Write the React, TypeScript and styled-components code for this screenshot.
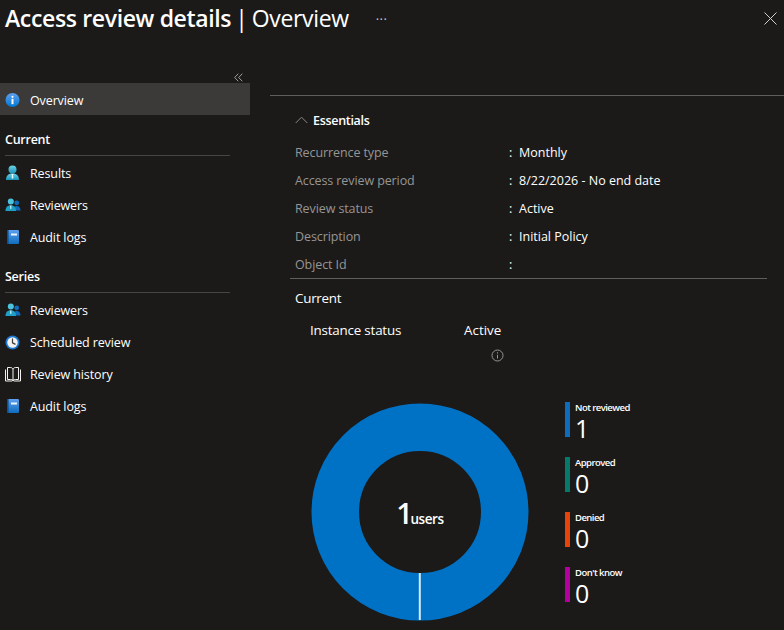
import * as React from "react";
import styled, { createGlobalStyle } from "styled-components";

const FONT = `"Open Sans", "Noto Sans", "Liberation Sans", sans-serif`;

const GlobalStyle = createGlobalStyle`
  html, body {
    margin: 0;
    padding: 0;
    background: #1b1a19;
    overflow: hidden;
  }
  body {
    font-family: ${FONT};
    color: #fff;
  }
`;

const Page = styled.div`
  width: 784px;
  height: 630px;
  overflow: hidden;
  background: #1b1a19;
`;

const Header = styled.header`
  height: 71px;
  display: flex;
  align-items: flex-start;
  padding: 2px 7px 0 5px;
  box-sizing: border-box;
`;

const Title = styled.h1`
  margin: 0;
  font-size: 23px;
  line-height: 32px;
  font-weight: 400;
  letter-spacing: -0.35px;
  word-spacing: -1.5px;
  white-space: nowrap;
  b {
    font-weight: 600;
    word-spacing: 0;
  }
`;

const More = styled.span`
  margin: 5px 0 0 27px;
  font-size: 13px;
  line-height: 24px;
  letter-spacing: 0.5px;
  color: #c8c6c4;
`;

const CloseButton = styled.button`
  margin: 10px 0 0 auto;
  padding: 0;
  width: 13px;
  height: 13px;
  border: 0;
  background: none;
  display: block;
`;

const Columns = styled.div`
  display: grid;
  grid-template-columns: 250px 1fr;
  column-gap: 20px;
`;

const Sidebar = styled.nav`
  display: flex;
  flex-direction: column;
`;

const CollapseRow = styled.div`
  height: 12px;
  display: flex;
  justify-content: flex-end;
  align-items: center;
  padding-right: 7px;
`;

const NavItem = styled.div<{ $active?: boolean }>`
  height: 32px;
  display: flex;
  align-items: center;
  gap: 10px;
  padding-left: 5px;
  padding-top: ${(p) => (p.$active ? "2px" : "0")};
  box-sizing: border-box;
  font-size: 12.5px;
  letter-spacing: -0.12px;
  background: ${(p) => (p.$active ? "#3b3a39" : "transparent")};
`;

const IconSlot = styled.span`
  width: 15px;
  height: 16px;
  display: flex;
  align-items: center;
  justify-content: center;
  flex: none;
  svg {
    flex: none;
  }
`;

const NavGroup = styled.div<{ $first?: boolean }>`
  margin: ${(p) => (p.$first ? "0" : "-1px")} 20px 1px 5px;
  padding-top: 16px;
  height: 41px;
  box-sizing: border-box;
  border-bottom: 1px solid #484644;
  font-size: 12.5px;
  line-height: 17px;
  font-weight: 600;
  letter-spacing: -0.25px;
`;

const Main = styled.main`
  margin-top: 24px;
  border-top: 1px solid #605e5c;
`;

const Essentials = styled.section`
  margin: 0 17px 0 20px;
`;

const EssentialsHead = styled.div`
  height: 42px;
  display: flex;
  align-items: center;
  gap: 5px;
  padding: 6px 0 0 5px;
  box-sizing: border-box;
  font-size: 12.5px;
  font-weight: 600;
  letter-spacing: -0.3px;
`;

const FactList = styled.div`
  border-bottom: 1px solid #605e5c;
`;

const FactRow = styled.div`
  height: 28px;
  display: grid;
  grid-template-columns: 214px 10px 1fr;
  align-items: center;
  padding-left: 5px;
  font-size: 12.5px;
`;

const FactLabel = styled.span`
  color: #979593;
  letter-spacing: -0.1px;
`;

const CurrentTitle = styled.div`
  padding: 10px 0 0 5px;
  font-size: 13.4px;
  line-height: 19px;
  letter-spacing: -0.25px;
`;

const StatusRow = styled.div`
  margin: 13px 0 0 40px;
  display: grid;
  grid-template-columns: 154px auto 1fr;
  font-size: 13.4px;
  line-height: 19px;
`;

const StatusName = styled.span`
  letter-spacing: -0.2px;
`;

const InfoRow = styled.div`
  margin: 9px 0 0 221px;
  height: 13px;
  svg {
    display: block;
  }
`;

const Chart = styled.div`
  margin: 41px 0 0 41px;
  display: flex;
  align-items: flex-start;
`;

const Donut = styled.div`
  position: relative;
  width: 218px;
  height: 218px;
  flex: none;
`;

const DonutCenter = styled.div`
  position: absolute;
  inset: 0;
  display: flex;
  align-items: baseline;
  justify-content: center;
  padding-top: 94px;
  box-sizing: border-box;
`;

const DonutCount = styled.span`
  font-size: 29px;
  line-height: 32px;
  font-weight: 600;
  letter-spacing: -2.5px;
`;

const DonutUnit = styled.span`
  font-size: 13.5px;
  font-weight: 600;
  letter-spacing: -0.4px;
`;

const Legend = styled.div`
  margin: -1px 0 0 36px;
  display: flex;
  flex-direction: column;
  gap: 20px;
`;

const LegendItem = styled.div<{ $color: string }>`
  height: 35px;
  border-left: 5px solid ${(p) => p.$color};
  padding-left: 5px;
  display: flex;
  flex-direction: column;
`;

const LegendLabel = styled.span`
  font-size: 9.5px;
  line-height: 11px;
  font-weight: 600;
  letter-spacing: -0.55px;
`;

const LegendValue = styled.span`
  font-size: 25px;
  line-height: 30px;
  font-weight: 500;
`;

const InfoDot = () => (
  <svg width="16" height="16" viewBox="0 0 16 16">
    <defs>
      <linearGradient id="infoGrad" x1="0" y1="0" x2="0" y2="1">
        <stop offset="0" stopColor="#5ea0ef" />
        <stop offset="1" stopColor="#0078d4" />
      </linearGradient>
    </defs>
    <circle cx="7.500" cy="8" r="7" fill="url(#infoGrad)" />
    <circle cx="7.500" cy="4.800" r="1.100" fill="#fff" />
    <rect x="6.500" y="6.800" width="2" height="5.400" fill="#fff" />
  </svg>
);

const PersonIcon = () => (
  <svg width="15" height="16" viewBox="0 0 15 16">
    <defs>
      <linearGradient id="personGrad" x1="0" y1="0" x2="0" y2="1">
        <stop offset="0" stopColor="#6bd3e8" />
        <stop offset="1" stopColor="#1b93b8" />
      </linearGradient>
    </defs>
    <circle cx="7.500" cy="4.500" r="4" fill="url(#personGrad)" />
    <path d="M1 15c0-4 2-6.500 6.500-6.500S14 11 14 15z" fill="url(#personGrad)" />
    <path d="M6.500 9h2l-.4 1.400.3 2.600-.9.800-.9-.8.3-2.600z" fill="#e6fbff" />
  </svg>
);

const PeopleIcon = () => (
  <svg width="16" height="14" viewBox="0 0 16 14">
    <circle cx="11.700" cy="4.800" r="2.400" fill="#0f6cbd" />
    <path d="M8.500 12.500c0-3 1-4.600 3.200-4.600s3.800 1.600 3.800 4.600z" fill="#0f6cbd" />
    <circle cx="5.800" cy="3.400" r="3" fill="#4cc3de" />
    <path d="M.5 13c0-3.600 1.600-5.800 5.300-5.800s5.200 2.200 5.200 5.800z" fill="#1f9fc4" />
    <path d="M5.100 7.500h1.400l-.2 1 .2 2-.7.600-.7-.6.2-2z" fill="#d8f6fb" />
  </svg>
);

const LogBookIcon = () => (
  <svg width="14" height="16" viewBox="0 0 14 16">
    <defs>
      <linearGradient id="bookGrad" x1="0" y1="0" x2="0" y2="1">
        <stop offset="0" stopColor="#5ea0ef" />
        <stop offset="1" stopColor="#0f6cbd" />
      </linearGradient>
    </defs>
    <rect x="1" y="1" width="12" height="14" rx="1.200" fill="url(#bookGrad)" />
    <rect x="1" y="1" width="1.600" height="14" fill="#0b4f94" />
    <rect x="5" y="4.500" width="6" height="2" fill="#eef6fd" />
  </svg>
);

const ClockIcon = () => (
  <svg width="15" height="15" viewBox="0 0 15 15">
    <circle cx="7.500" cy="7.500" r="7" fill="#1c78d0" />
    <circle cx="7.500" cy="7.500" r="5.200" fill="#f2f2f2" />
    <path d="M7.500 3.600v4.200l3 1.600" fill="none" stroke="#3b3a39" strokeWidth="1.200" />
  </svg>
);

const OpenBookIcon = () => (
  <svg width="16" height="15" viewBox="0 0 16 15" fill="none" stroke="#f3f2f1" strokeWidth="1">
    <path d="M.5 2.500v11.500h6.400l1.100-.7 1.100.7h6.400V2.500" />
    <path d="M2.500 12.500V.5h2.800c1.400 0 2.700.7 2.700 2v10.800c-.6-.6-1.600-.8-2.700-.8z" />
    <path d="M13.500 12.500V.5h-2.800C9.300.5 8 1.200 8 2.500" />
    <path d="M13.500 12.500h-2.800c-1.100 0-2.100.2-2.700.8" />
  </svg>
);

const ChevronsLeft = () => (
  <svg width="9" height="9" viewBox="0 0 9 9" fill="none" stroke="#a19f9d" strokeWidth="1">
    <path d="M4.300.7.700 4.500l3.600 3.800" />
    <path d="M8.300.7 4.700 4.500l3.600 3.800" />
  </svg>
);

const ChevronUp = () => (
  <svg width="13" height="8" viewBox="0 0 13 8" fill="none" stroke="#8a8886" strokeWidth="1">
    <path d="M.7 7 6.500 1.200 12.300 7" />
  </svg>
);

const CircleInfo = () => (
  <svg width="13" height="13" viewBox="0 0 13 13" fill="none" stroke="#979593">
    <circle cx="6.500" cy="6.500" r="5.500" />
    <path d="M6.500 5.800v3.700M6.500 3.200v1.300" />
  </svg>
);

// ring geometry: the whole circle is the one "Not reviewed" user
const DonutChart = () => (
  <svg width="218" height="218" viewBox="0 0 218 218">
    <circle cx="109" cy="109" r="84.750" fill="none" stroke="#0072c6" strokeWidth="47.500" />
    <rect x="107.800" y="170" width="2" height="47" fill="#d6e9f8" />
  </svg>
);

const facts = [
  ["Recurrence type", "Monthly"],
  ["Access review period", "8/22/2026 - No end date"],
  ["Review status", "Active"],
  ["Description", "Initial Policy"],
  ["Object Id", ""],
];

const legend = [
  { label: "Not reviewed", value: 1, color: "#0f6cbd" },
  { label: "Approved", value: 0, color: "#067a6a" },
  { label: "Denied", value: 0, color: "#e8440a" },
  { label: "Don't know", value: 0, color: "#b4009e" },
];

export default function App() {
  return (
    <Page>
      <GlobalStyle />
      <Header>
        <Title>
          <b>Access review details</b> | Overview
        </Title>
        <More>···</More>
        <CloseButton aria-label="Close">
          <svg width="13" height="13" viewBox="0 0 13 13" fill="none" stroke="#d2d0ce">
            <path d="M.5.5l12 12M12.500.5l-12 12" />
          </svg>
        </CloseButton>
      </Header>
      <Columns>
        <Sidebar>
          <CollapseRow>
            <ChevronsLeft />
          </CollapseRow>
          <NavItem $active>
            <IconSlot><InfoDot /></IconSlot>
            Overview
          </NavItem>
          <NavGroup $first>Current</NavGroup>
          <NavItem>
            <IconSlot><PersonIcon /></IconSlot>
            Results
          </NavItem>
          <NavItem>
            <IconSlot><PeopleIcon /></IconSlot>
            Reviewers
          </NavItem>
          <NavItem>
            <IconSlot><LogBookIcon /></IconSlot>
            Audit logs
          </NavItem>
          <NavGroup>Series</NavGroup>
          <NavItem>
            <IconSlot><PeopleIcon /></IconSlot>
            Reviewers
          </NavItem>
          <NavItem>
            <IconSlot><ClockIcon /></IconSlot>
            Scheduled review
          </NavItem>
          <NavItem>
            <IconSlot><OpenBookIcon /></IconSlot>
            Review history
          </NavItem>
          <NavItem>
            <IconSlot><LogBookIcon /></IconSlot>
            Audit logs
          </NavItem>
        </Sidebar>
        <Main>
          <Essentials>
            <EssentialsHead>
              <ChevronUp />
              Essentials
            </EssentialsHead>
            <FactList>
              {facts.map(([label, value]) => (
                <FactRow key={label}>
                  <FactLabel>{label}</FactLabel>
                  <span>:</span>
                  <span>{value}</span>
                </FactRow>
              ))}
            </FactList>
            <CurrentTitle>Current</CurrentTitle>
          </Essentials>
          <StatusRow>
            <StatusName>Instance status</StatusName>
            <span>Active</span>
          </StatusRow>
          <InfoRow>
            <CircleInfo />
          </InfoRow>
          <Chart>
            <Donut>
              <DonutChart />
              <DonutCenter>
                <DonutCount>1</DonutCount>
                <DonutUnit>users</DonutUnit>
              </DonutCenter>
            </Donut>
            <Legend>
              {legend.map((item) => (
                <LegendItem key={item.label} $color={item.color}>
                  <LegendLabel>{item.label}</LegendLabel>
                  <LegendValue>{item.value}</LegendValue>
                </LegendItem>
              ))}
            </Legend>
          </Chart>
        </Main>
      </Columns>
    </Page>
  );
}
